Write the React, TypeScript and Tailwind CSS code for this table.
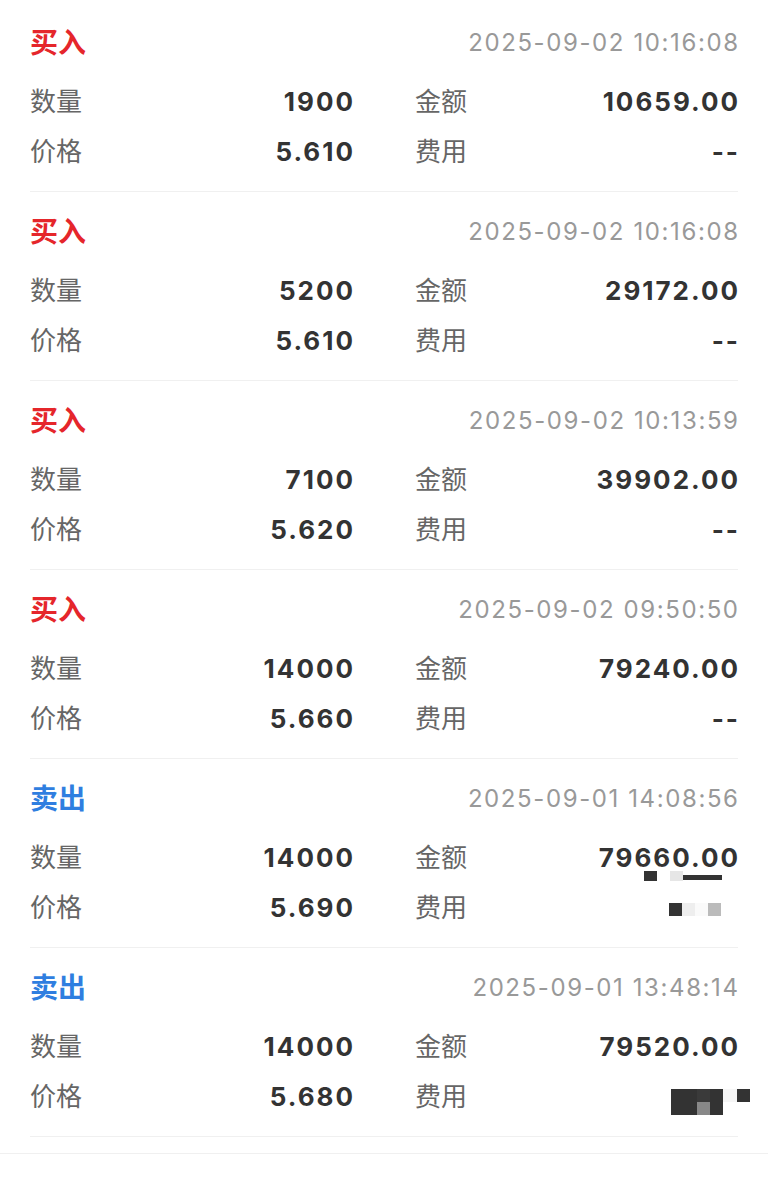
import React from "react";

type Trade = {
  side: "buy" | "sell";
  time: string;
  qty: string;
  amount: string;
  price: string;
  fee: React.ReactNode;
  smudge?: boolean;
};

function FeeMosaicA() {
  return (
    <span className="flex items-start h-[13px] mt-[3px] mr-[19px]">
      <span className="w-[13px] h-[13px] bg-[#333333]" />
      <span className="w-[13px] h-[13px] bg-[#eeeeee]" />
      <span className="w-[13px] h-[13px] bg-[#fafafa]" />
      <span className="w-[13px] h-[13px] bg-[#bbbbbb]" />
    </span>
  );
}

function FeeMosaicB() {
  return (
    <span className="flex items-start h-[26px] mt-[10px] mr-[-10px]">
      <span className="w-[26px] h-[26px] bg-[#333333]" />
      <span className="w-[13px] h-[26px] flex flex-col">
        <span className="h-[13px] bg-[#3a3a3a]" />
        <span className="h-[13px] bg-[#888888]" />
      </span>
      <span className="w-[13px] h-[26px] bg-[#333333]" />
      <span className="w-[14px] h-[13px] bg-[#f5f5f5]" />
      <span className="w-[13px] h-[13px] bg-[#333333]" />
    </span>
  );
}

const trades: Trade[] = [
  { side: "buy", time: "2025-09-02 10:16:08", qty: "1900", amount: "10659.00", price: "5.610", fee: "--" },
  { side: "buy", time: "2025-09-02 10:16:08", qty: "5200", amount: "29172.00", price: "5.610", fee: "--" },
  { side: "buy", time: "2025-09-02 10:13:59", qty: "7100", amount: "39902.00", price: "5.620", fee: "--" },
  { side: "buy", time: "2025-09-02 09:50:50", qty: "14000", amount: "79240.00", price: "5.660", fee: "--" },
  { side: "sell", time: "2025-09-01 14:08:56", qty: "14000", amount: "79660.00", price: "5.690", fee: <FeeMosaicA />, smudge: true },
  { side: "sell", time: "2025-09-01 13:48:14", qty: "14000", amount: "79520.00", price: "5.680", fee: <FeeMosaicB /> },
];

const font = { fontFamily: "Inter, 'Noto Sans CJK SC', sans-serif" };

function Cell({ label, value, smudge }: { label: string; value: React.ReactNode; smudge?: boolean }) {
  return (
    <div className="flex items-center justify-between h-[36px]">
      <span className="text-[26px] leading-[36px] text-[#666666]">{label}</span>
      <span className="relative text-[26px] leading-[36px] font-bold tracking-[2px] mr-[-2px] text-[#333333] flex">
        {value}
        {smudge && (
          <span className="absolute right-[18px] top-[31px] flex items-start">
            <span className="w-[13px] h-[10px] bg-[#333333]" />
            <span className="w-[13px] h-[10px] bg-white" />
            <span className="w-[13px] h-[10px] bg-[#e6e6e6]" />
            <span className="w-[39px] h-[5px] mt-[4px] bg-[#333333]" />
          </span>
        )}
      </span>
    </div>
  );
}

export default function App() {
  return (
    <div className="w-[768px] min-h-[1177px] bg-white pt-[3px]" style={font}>
      {trades.map((t, i) => (
        <div key={i} className="mx-[30px] pt-[22px] pb-[21px] border-b border-[#f0f0f0]">
          <div className="flex items-center justify-between h-[36px]">
            <span
              className={
                "text-[28px] leading-[36px] font-bold " +
                (t.side === "buy" ? "text-[#e5262b]" : "text-[#2f7ee0]")
              }
            >
              {t.side === "buy" ? "买入" : "卖出"}
            </span>
            <span className="text-[24px] leading-[36px] tracking-[1.6px] mr-[-1.6px] text-[#999999]">{t.time}</span>
          </div>
          <div className="mt-[23px] grid grid-cols-2 gap-x-[62px] gap-y-[14px]">
            <Cell label="数量" value={t.qty} />
            <Cell label="金额" value={t.amount} smudge={t.smudge} />
            <Cell label="价格" value={t.price} />
            <Cell label="费用" value={t.fee} />
          </div>
        </div>
      ))}
      <div className="h-[17px] border-b border-[#f0f0f0]" />
    </div>
  );
}
